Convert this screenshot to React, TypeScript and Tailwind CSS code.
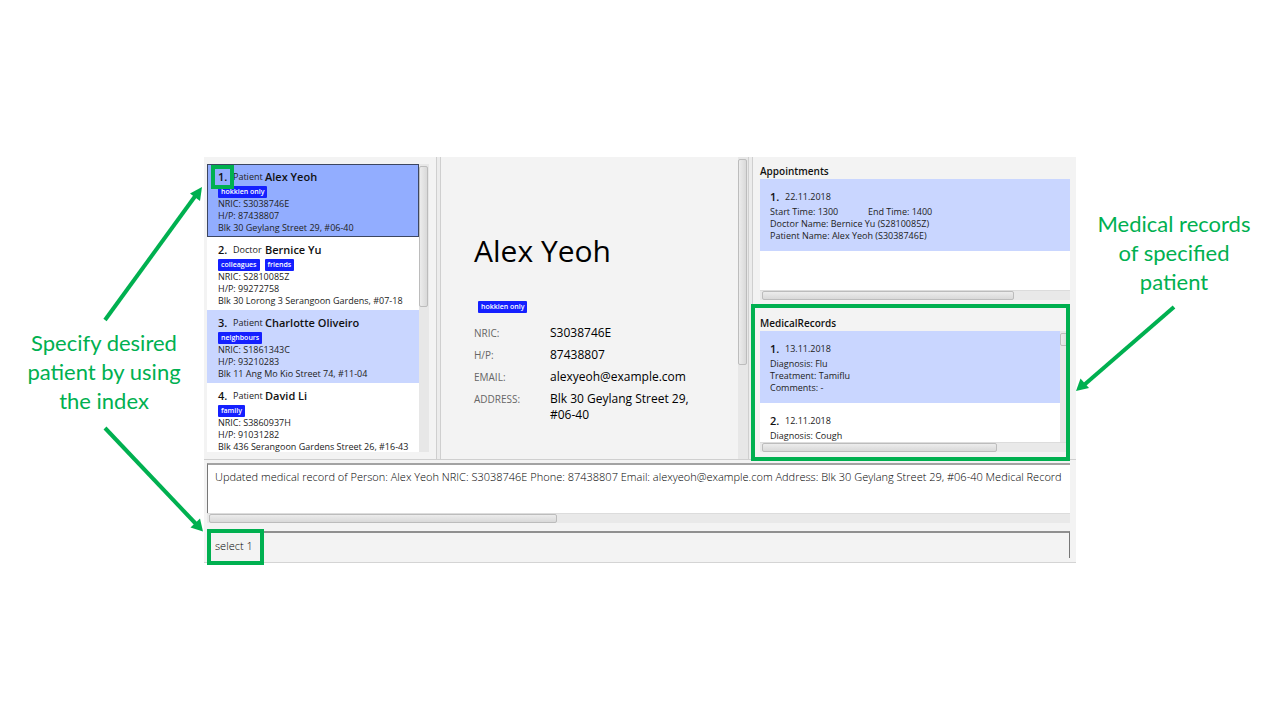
import type { ReactNode } from 'react';

type Person = {
  role: string;
  name: string;
  tags: string[];
  nric: string;
  phone: string;
  address: string;
};

const people: Person[] = [
  { role: 'Patient', name: 'Alex Yeoh', tags: ['hokkien only'], nric: 'S3038746E', phone: '87438807', address: 'Blk 30 Geylang Street 29, #06-40' },
  { role: 'Doctor', name: 'Bernice Yu', tags: ['colleagues', 'friends'], nric: 'S2810085Z', phone: '99272758', address: 'Blk 30 Lorong 3 Serangoon Gardens, #07-18' },
  { role: 'Patient', name: 'Charlotte Oliveiro', tags: ['neighbours'], nric: 'S1861343C', phone: '93210283', address: 'Blk 11 Ang Mo Kio Street 74, #11-04' },
  { role: 'Patient', name: 'David Li', tags: ['family'], nric: 'S3860937H', phone: '91031282', address: 'Blk 436 Serangoon Gardens Street 26, #16-43' },
];

const details = [
  ['NRIC:', 'S3038746E'],
  ['H/P:', '87438807'],
  ['EMAIL:', 'alexyeoh@example.com'],
  ['ADDRESS:', 'Blk 30 Geylang Street 29, #06-40'],
];

const records = [
  { date: '13.11.2018', lines: ['Diagnosis: Flu', 'Treatment: Tamiflu', 'Comments: -'] },
  { date: '12.11.2018', lines: ['Diagnosis: Cough'] },
];

function Tag({ children }: { children: ReactNode }) {
  return (
    <span className="h-3 rounded-[1px] bg-[#1420ff] px-[3px] text-[7px] leading-[11px] font-semibold text-white">
      {children}
    </span>
  );
}

function Splitter() {
  return <div className="border-x border-[#cfcfcf] bg-[#ececec]" />;
}

function HorizontalBar({ thumb }: { thumb: string }) {
  return (
    <div className="h-[10px] border-t border-[#dcdcdc] bg-[#e9e9e9] px-0.5">
      <div className={`h-[9px] rounded-[2px] border border-[#bcbcbc] bg-linear-to-b from-[#ececec] to-[#d9d9d9] ${thumb}`} />
    </div>
  );
}

function VerticalBar({ thumb }: { thumb: string }) {
  return (
    <div className="w-[10px] shrink-0 bg-[#e7e7e7] pt-0.5">
      <div className={`w-[9px] rounded-[2px] border border-[#bcbcbc] bg-linear-to-r from-[#ececec] to-[#d9d9d9] ${thumb}`} />
    </div>
  );
}

function PersonCard({ person, index }: { person: Person; index: number }) {
  const selected = index === 0;
  const tone = selected
    ? 'bg-[#92adff] ring-1 ring-inset ring-[#3c4660]'
    : index % 2 === 0
      ? 'bg-[#c9d6ff]'
      : 'bg-white';
  return (
    <li className={`relative h-[73px] shrink-0 pt-[5px] pl-[11px] text-[9px] leading-3 whitespace-nowrap text-[#222] ${tone}`}>
      <div className="mb-px flex h-4 items-center">
        <span className="w-[15px] text-[11px] font-semibold text-[#111]">{index + 1}.</span>
        <span className="w-8">{person.role}</span>
        <span className="text-[11px] font-semibold text-[#111]">{person.name}</span>
      </div>
      <div className="flex h-3 gap-[5px]">
        {person.tags.map((tag) => (
          <Tag key={tag}>{tag}</Tag>
        ))}
      </div>
      <p>NRIC: {person.nric}</p>
      <p>H/P: {person.phone}</p>
      <p>{person.address}</p>
      {selected && <span className="absolute top-px left-1 h-6 w-[23px] border-4 border-[#00b050]" />}
    </li>
  );
}

function EntryCard({ index, date, tone, children }: { index: number; date: string; tone: string; children: ReactNode }) {
  return (
    <li className={`h-[72px] shrink-0 pt-2.5 pl-2.5 text-[9px] leading-3 whitespace-nowrap text-[#222] ${tone}`}>
      <div className="mb-px flex h-4 items-center">
        <span className="w-[15px] text-[11px] font-semibold text-[#111]">{index}.</span>
        <span>{date}</span>
      </div>
      {children}
    </li>
  );
}

export default function App() {
  return (
    <main className="grid min-h-screen grid-cols-[204px_minmax(0,1fr)_204px] content-center overflow-hidden bg-white font-['Open_Sans','Noto_Sans',sans-serif]">
      <aside className="pt-[26px] text-center font-['Lato',sans-serif] text-[22px] leading-[29px] text-[#00b050]">
        <svg className="block h-[145px] w-[204px]" viewBox="0 0 204 145" fill="#00b050" aria-hidden="true">
          <path d="M105 137 L196 12" stroke="#00b050" strokeWidth="4" />
          <path d="M202 4 L200 18 L190 10.500 Z" />
        </svg>
        <p className="pl-1">
          Specify desired
          <br />
          patient by using
          <br />
          the index
        </p>
        <svg className="mt-2 block h-[112px] w-[204px]" viewBox="0 0 204 112" fill="#00b050" aria-hidden="true">
          <path d="M105 5 L197 102" stroke="#00b050" strokeWidth="4" />
          <path d="M203 108.500 L190.500 104.500 L200 95.500 Z" />
        </svg>
      </aside>

      <div className="min-w-0 border-b border-[#d4d4d4] bg-[#f3f3f3] pb-1">
        <div className="grid h-[303px] grid-cols-[232px_5px_minmax(0,1fr)_5px_323px] grid-rows-[minmax(0,1fr)] border-b border-[#cfcfcf]">
          <section aria-label="Persons" className="flex py-[7px] pr-[7px] pl-[3px]">
            <ul className="flex min-w-0 flex-1 flex-col overflow-hidden bg-white">
              {people.map((person, i) => (
                <PersonCard key={person.name} person={person} index={i} />
              ))}
            </ul>
            <VerticalBar thumb="h-[141px]" />
          </section>

          <Splitter />

          <section aria-label="Person details" className="flex min-w-0">
            <div className="min-w-0 flex-1 pt-[74px] pl-[33px]">
              <h1 className="text-[30px] leading-10 text-black">Alex Yeoh</h1>
              <div className="mt-[30px] ml-1 flex">
                <Tag>hokkien only</Tag>
              </div>
              <dl className="mt-3 grid grid-cols-[76px_150px] gap-y-[6px] leading-4">
                {details.map(([label, value]) => (
                  <div key={label} className="contents">
                    <dt className="text-[10px] text-[#666]">{label}</dt>
                    <dd className="text-[12px] text-black">{value}</dd>
                  </div>
                ))}
              </dl>
            </div>
            <VerticalBar thumb="h-[206px]" />
          </section>

          <Splitter />

          <div className="min-w-0 pr-1.5 pl-[7px]">
            <section className="pt-[7px]">
              <h2 className="h-[15px] text-[10px] leading-[15px] font-semibold text-[#111]">Appointments</h2>
              <ul className="h-[111px] overflow-hidden bg-white">
                <EntryCard index={1} date="22.11.2018" tone="bg-[#c9d6ff]">
                  <div className="flex">
                    <p className="w-[98px]">Start Time: 1300</p>
                    <p>End Time: 1400</p>
                  </div>
                  <p>Doctor Name: Bernice Yu (S2810085Z)</p>
                  <p>Patient Name: Alex Yeoh (S3038746E)</p>
                </EntryCard>
              </ul>
              <HorizontalBar thumb="w-[252px]" />
            </section>

            <section className="relative mt-4">
              <h2 className="h-[15px] text-[10px] leading-[15px] font-semibold text-[#111]">MedicalRecords</h2>
              <div className="flex h-[111px]">
                <ul className="min-w-0 flex-1 overflow-hidden bg-white">
                  {records.map((record, i) => (
                    <EntryCard key={record.date} index={i + 1} date={record.date} tone={i === 0 ? 'bg-[#c9d6ff]' : 'bg-white'}>
                      {record.lines.map((line) => (
                        <p key={line}>{line}</p>
                      ))}
                    </EntryCard>
                  ))}
                </ul>
                <VerticalBar thumb="h-[13px]" />
              </div>
              <HorizontalBar thumb="w-[235px]" />
              <div className="absolute -top-3 right-0 -bottom-[9px] -left-[9px] border-4 border-[#00b050]" />
            </section>
          </div>
        </div>

        <div className="pt-[3px] pr-1.5 pl-[3px]">
          <textarea
            readOnly
            wrap="off"
            aria-label="Result"
            className="block h-[50px] w-full resize-none overflow-hidden border-t-2 border-l border-t-[#a3a3a3] border-l-[#777] bg-white pt-1 pl-[7px] text-[11px] leading-4 font-light text-black outline-none"
            value="Updated medical record of Person: Alex Yeoh NRIC: S3038746E Phone: 87438807 Email: alexyeoh@example.com Address: Blk 30 Geylang Street 29, #06-40 Medical Record"
          />
          <HorizontalBar thumb="w-[348px]" />
          <div className="relative mt-2">
            <input
              aria-label="Command"
              defaultValue="select 1"
              className="block h-[27px] w-full border-x border-t-2 border-x-[#777] border-t-[#8f8f8f] bg-[#f3f3f3] pl-[7px] text-[11px] font-light text-black outline-none"
            />
            <div className="pointer-events-none absolute -top-0.5 left-0 h-9 w-[57px] border-4 border-[#00b050]" />
          </div>
        </div>
      </div>

      <aside className="pt-[52px] text-center font-['Lato',sans-serif] text-[22px] leading-[29px] text-[#00b050]">
        <p className="pr-2">
          Medical records
          <br />
          of specified
          <br />
          patient
        </p>
        <svg className="mt-2 block h-[90px] w-[204px]" viewBox="0 0 204 90" fill="#00b050" aria-hidden="true">
          <path d="M98 3 L8 81" stroke="#00b050" strokeWidth="4" />
          <path d="M0 87 L4.500 74.500 L13 84 Z" />
        </svg>
      </aside>
    </main>
  );
}
